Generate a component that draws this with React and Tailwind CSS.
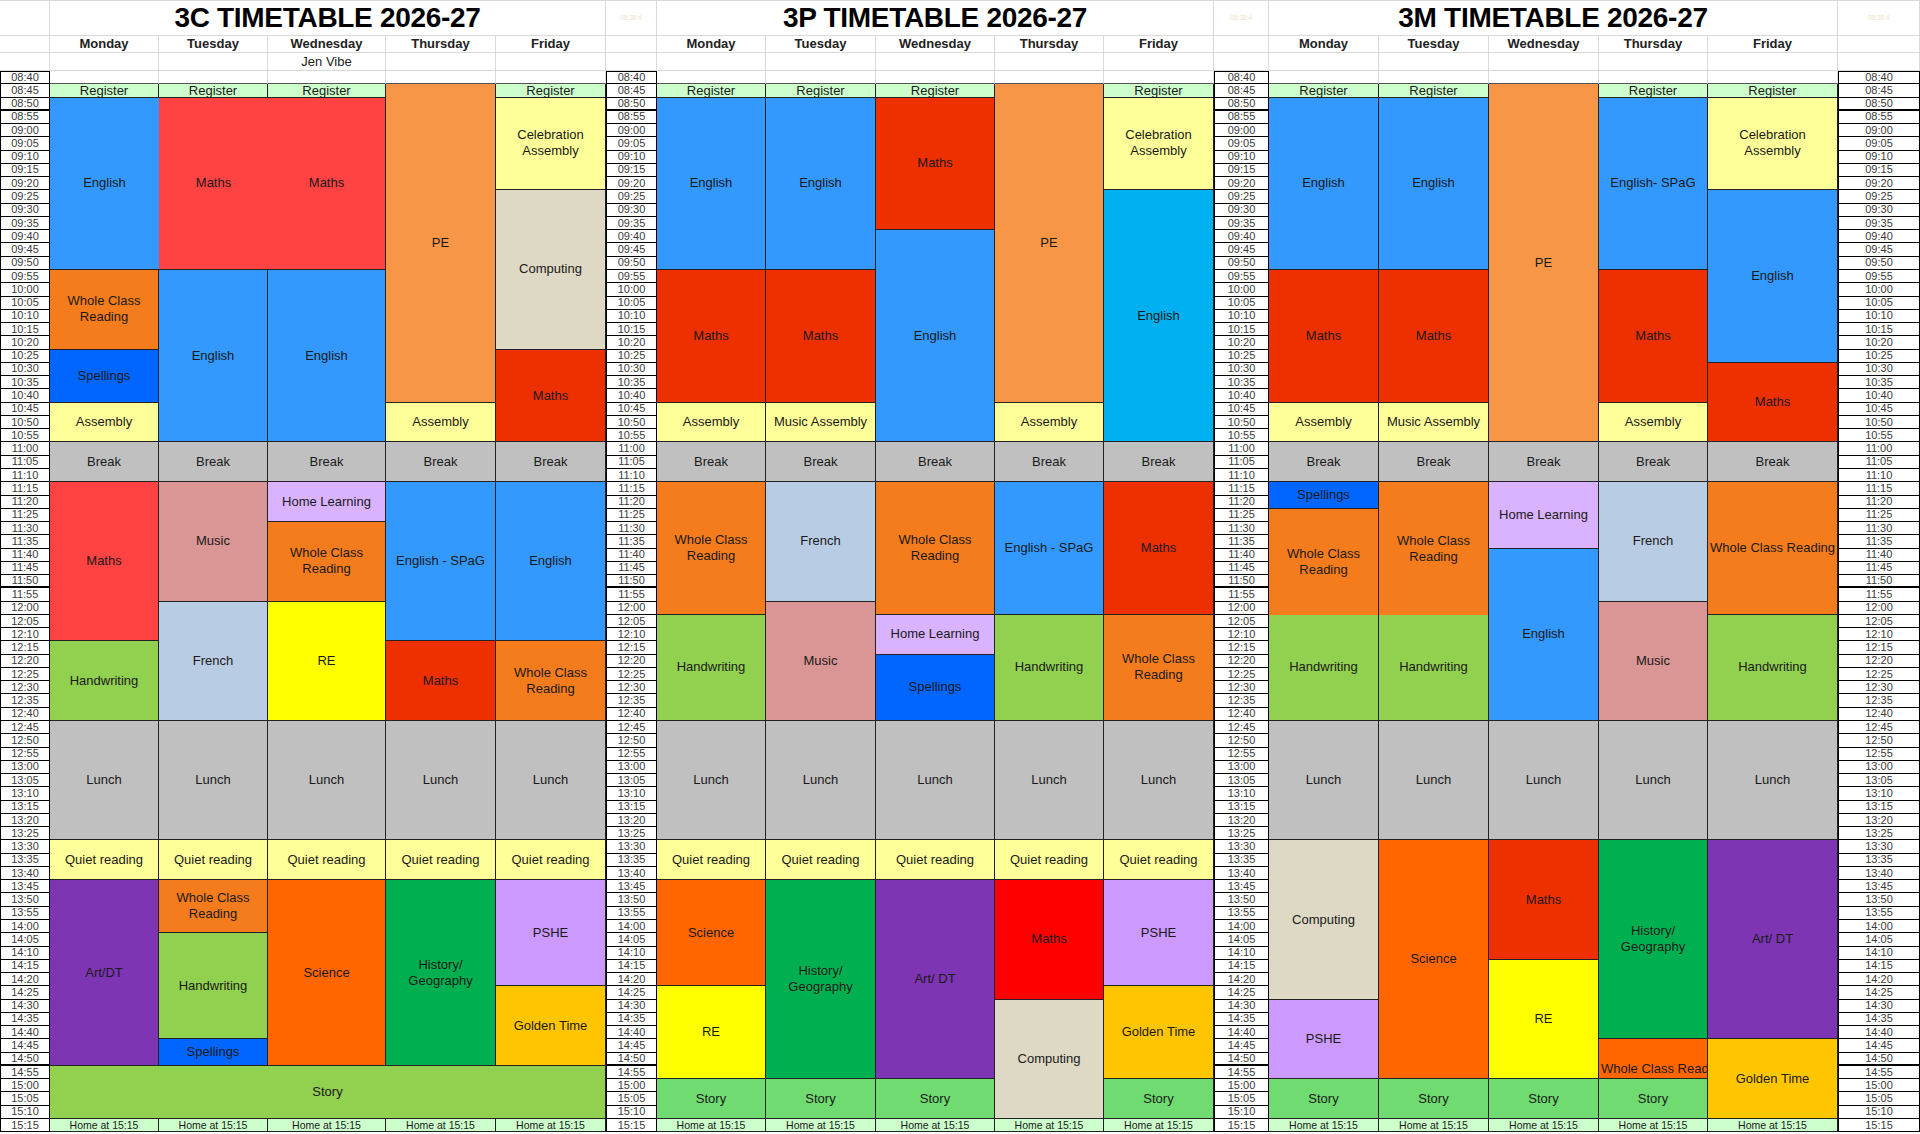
import React from "react";

const toMin = (t) => {
  const [h, m] = t.split(":").map(Number);
  return h * 60 + m;
};
const idx = (t) => (toMin(t) - 520) / 5;
const fmt = (m) =>
  `${String(Math.floor(m / 60)).padStart(2, "0")}:${String(m % 60).padStart(2, "0")}`;

const C = {
  reg: "bg-[#ccffcc]",
  eng: "bg-[#3399ff]",
  engC: "bg-[#00b0f0]",
  mathL: "bg-[#ff4343]",
  mathD: "bg-[#ee3000]",
  mathB: "bg-[#ff0000]",
  pe: "bg-[#f79646]",
  yel: "bg-[#ffff99]",
  comp: "bg-[#ddd9c4]",
  wcr: "bg-[#f47c1c]",
  spell: "bg-[#0066ff]",
  gray: "bg-[#c0c0c0]",
  music: "bg-[#da9694]",
  french: "bg-[#b8cce4]",
  hl: "bg-[#d9b3ff]",
  re: "bg-[#ffff00]",
  hand: "bg-[#92d050]",
  art: "bg-[#7d35b4]",
  sci: "bg-[#ff6600]",
  hist: "bg-[#00b050]",
  pshe: "bg-[#cc99ff]",
  gold: "bg-[#ffc600]",
  story: "bg-[#70db70]",
};

// [day, start, end, label, colour, flags, span]
const L3C = [
  [0, "08:45", "08:50", "Register", C.reg],
  [0, "08:50", "09:55", "English", C.eng, { nr: true }],
  [0, "09:55", "10:25", "Whole Class Reading", C.wcr],
  [0, "10:25", "10:45", "Spellings", C.spell],
  [0, "10:45", "11:00", "Assembly", C.yel],
  [0, "11:00", "11:15", "Break", C.gray],
  [0, "11:15", "12:15", "Maths", C.mathL],
  [0, "12:15", "12:45", "Handwriting", C.hand],
  [0, "12:45", "13:30", "Lunch", C.gray],
  [0, "13:30", "13:45", "Quiet reading", C.yel],
  [0, "13:45", "14:55", "Art/DT", C.art],

  [1, "08:45", "08:50", "Register", C.reg],
  [1, "08:50", "09:55", "Maths", C.mathL, { nr: true }],
  [1, "09:55", "11:00", "English", C.eng],
  [1, "11:00", "11:15", "Break", C.gray],
  [1, "11:15", "12:00", "Music", C.music],
  [1, "12:00", "12:45", "French", C.french],
  [1, "12:45", "13:30", "Lunch", C.gray],
  [1, "13:30", "13:45", "Quiet reading", C.yel],
  [1, "13:45", "14:05", "Whole Class Reading", C.wcr],
  [1, "14:05", "14:45", "Handwriting", C.hand],
  [1, "14:45", "14:55", "Spellings", C.spell],

  [2, "08:45", "08:50", "Register", C.reg],
  [2, "08:50", "09:55", "Maths", C.mathL],
  [2, "09:55", "11:00", "English", C.eng],
  [2, "11:00", "11:15", "Break", C.gray],
  [2, "11:15", "11:30", "Home Learning", C.hl],
  [2, "11:30", "12:00", "Whole Class Reading", C.wcr],
  [2, "12:00", "12:45", "RE", C.re],
  [2, "12:45", "13:30", "Lunch", C.gray],
  [2, "13:30", "13:45", "Quiet reading", C.yel],
  [2, "13:45", "14:55", "Science", C.sci],

  [3, "08:45", "10:45", "PE", C.pe],
  [3, "10:45", "11:00", "Assembly", C.yel],
  [3, "11:00", "11:15", "Break", C.gray],
  [3, "11:15", "12:15", "English - SPaG", C.eng],
  [3, "12:15", "12:45", "Maths", C.mathD],
  [3, "12:45", "13:30", "Lunch", C.gray],
  [3, "13:30", "13:45", "Quiet reading", C.yel],
  [3, "13:45", "14:55", "History/ Geography", C.hist],

  [4, "08:45", "08:50", "Register", C.reg],
  [4, "08:50", "09:25", "Celebration Assembly", C.yel],
  [4, "09:25", "10:25", "Computing", C.comp],
  [4, "10:25", "11:00", "Maths", C.mathD],
  [4, "11:00", "11:15", "Break", C.gray],
  [4, "11:15", "12:15", "English", C.eng],
  [4, "12:15", "12:45", "Whole Class Reading", C.wcr],
  [4, "12:45", "13:30", "Lunch", C.gray],
  [4, "13:30", "13:45", "Quiet reading", C.yel],
  [4, "13:45", "14:25", "PSHE", C.pshe],
  [4, "14:25", "14:55", "Golden Time", C.gold],

  [0, "14:55", "15:15", "Story", C.hand, {}, 5],
];

const L3P = [
  [0, "08:45", "08:50", "Register", C.reg],
  [0, "08:50", "09:55", "English", C.eng],
  [0, "09:55", "10:45", "Maths", C.mathD],
  [0, "10:45", "11:00", "Assembly", C.yel],
  [0, "11:00", "11:15", "Break", C.gray],
  [0, "11:15", "12:05", "Whole Class Reading", C.wcr],
  [0, "12:05", "12:45", "Handwriting", C.hand],
  [0, "12:45", "13:30", "Lunch", C.gray],
  [0, "13:30", "13:45", "Quiet reading", C.yel],
  [0, "13:45", "14:25", "Science", C.sci],
  [0, "14:25", "15:00", "RE", C.re],
  [0, "15:00", "15:15", "Story", C.story],

  [1, "08:45", "08:50", "Register", C.reg],
  [1, "08:50", "09:55", "English", C.eng],
  [1, "09:55", "10:45", "Maths", C.mathD],
  [1, "10:45", "11:00", "Music Assembly", C.yel],
  [1, "11:00", "11:15", "Break", C.gray],
  [1, "11:15", "12:00", "French", C.french],
  [1, "12:00", "12:45", "Music", C.music],
  [1, "12:45", "13:30", "Lunch", C.gray],
  [1, "13:30", "13:45", "Quiet reading", C.yel],
  [1, "13:45", "15:00", "History/ Geography", C.hist],
  [1, "15:00", "15:15", "Story", C.story],

  [2, "08:45", "08:50", "Register", C.reg],
  [2, "08:50", "09:40", "Maths", C.mathD],
  [2, "09:40", "11:00", "English", C.eng],
  [2, "11:00", "11:15", "Break", C.gray],
  [2, "11:15", "12:05", "Whole Class Reading", C.wcr],
  [2, "12:05", "12:20", "Home Learning", C.hl],
  [2, "12:20", "12:45", "Spellings", C.spell],
  [2, "12:45", "13:30", "Lunch", C.gray],
  [2, "13:30", "13:45", "Quiet reading", C.yel],
  [2, "13:45", "15:00", "Art/ DT", C.art],
  [2, "15:00", "15:15", "Story", C.story],

  [3, "08:45", "10:45", "PE", C.pe],
  [3, "10:45", "11:00", "Assembly", C.yel],
  [3, "11:00", "11:15", "Break", C.gray],
  [3, "11:15", "12:05", "English - SPaG", C.eng],
  [3, "12:05", "12:45", "Handwriting", C.hand],
  [3, "12:45", "13:30", "Lunch", C.gray],
  [3, "13:30", "13:45", "Quiet reading", C.yel],
  [3, "13:45", "14:30", "Maths", C.mathB],
  [3, "14:30", "15:15", "Computing", C.comp],

  [4, "08:45", "08:50", "Register", C.reg],
  [4, "08:50", "09:25", "Celebration Assembly", C.yel],
  [4, "09:25", "11:00", "English", C.engC],
  [4, "11:00", "11:15", "Break", C.gray],
  [4, "11:15", "12:05", "Maths", C.mathD],
  [4, "12:05", "12:45", "Whole Class Reading", C.wcr],
  [4, "12:45", "13:30", "Lunch", C.gray],
  [4, "13:30", "13:45", "Quiet reading", C.yel],
  [4, "13:45", "14:25", "PSHE", C.pshe],
  [4, "14:25", "15:00", "Golden Time", C.gold],
  [4, "15:00", "15:15", "Story", C.story],
];

const L3M = [
  [0, "08:45", "08:50", "Register", C.reg],
  [0, "08:50", "09:55", "English", C.eng],
  [0, "09:55", "10:45", "Maths", C.mathD],
  [0, "10:45", "11:00", "Assembly", C.yel],
  [0, "11:00", "11:15", "Break", C.gray],
  [0, "11:15", "11:25", "Spellings", C.spell],
  [0, "11:25", "12:05", "Whole Class Reading", C.wcr, { nb: true }],
  [0, "12:05", "12:45", "Handwriting", C.hand],
  [0, "12:45", "13:30", "Lunch", C.gray],
  [0, "13:30", "14:30", "Computing", C.comp],
  [0, "14:30", "15:00", "PSHE", C.pshe],
  [0, "15:00", "15:15", "Story", C.story],

  [1, "08:45", "08:50", "Register", C.reg],
  [1, "08:50", "09:55", "English", C.eng],
  [1, "09:55", "10:45", "Maths", C.mathD],
  [1, "10:45", "11:00", "Music Assembly", C.yel],
  [1, "11:00", "11:15", "Break", C.gray],
  [1, "11:15", "12:05", "Whole Class Reading", C.wcr, { nb: true }],
  [1, "12:05", "12:45", "Handwriting", C.hand],
  [1, "12:45", "13:30", "Lunch", C.gray],
  [1, "13:30", "15:00", "Science", C.sci],
  [1, "15:00", "15:15", "Story", C.story],

  [2, "08:45", "11:00", "PE", C.pe],
  [2, "11:00", "11:15", "Break", C.gray],
  [2, "11:15", "11:40", "Home Learning", C.hl],
  [2, "11:40", "12:45", "English", C.eng],
  [2, "12:45", "13:30", "Lunch", C.gray],
  [2, "13:30", "14:15", "Maths", C.mathD],
  [2, "14:15", "15:00", "RE", C.re],
  [2, "15:00", "15:15", "Story", C.story],

  [3, "08:45", "08:50", "Register", C.reg],
  [3, "08:50", "09:55", "English- SPaG", C.eng],
  [3, "09:55", "10:45", "Maths", C.mathD],
  [3, "10:45", "11:00", "Assembly", C.yel],
  [3, "11:00", "11:15", "Break", C.gray],
  [3, "11:15", "12:00", "French", C.french],
  [3, "12:00", "12:45", "Music", C.music],
  [3, "12:45", "13:30", "Lunch", C.gray],
  [3, "13:30", "14:45", "History/ Geography", C.hist],
  [3, "14:45", "15:00", "Whole Class Reading", C.sci, { trunc: true }],
  [3, "15:00", "15:15", "Story", C.story],

  [4, "08:45", "08:50", "Register", C.reg],
  [4, "08:50", "09:25", "Celebration Assembly", C.yel],
  [4, "09:25", "10:30", "English", C.eng],
  [4, "10:30", "11:00", "Maths", C.mathD],
  [4, "11:00", "11:15", "Break", C.gray],
  [4, "11:15", "12:05", "Whole Class Reading", C.wcr],
  [4, "12:05", "12:45", "Handwriting", C.hand],
  [4, "12:45", "13:30", "Lunch", C.gray],
  [4, "13:30", "14:45", "Art/ DT", C.art],
  [4, "14:45", "15:15", "Golden Time", C.gold],
];

const SECTIONS = [
  { title: "3C TIMETABLE 2026-27", col: 2, lessons: L3C, note: [2, "Jen Vibe"] },
  { title: "3P TIMETABLE 2026-27", col: 8, lessons: L3P },
  { title: "3M TIMETABLE 2026-27", col: 14, lessons: L3M },
];

const DAYS = ["Monday", "Tuesday", "Wednesday", "Thursday", "Friday"];
const TIME_COLS = [1, 7, 13, 19];
const TIMES = Array.from({ length: 80 }, (_, i) => fmt(520 + i * 5));

function Lesson({ l, col }) {
  const [day, s, e, label, bg, flags = {}, span = 1] = l;
  const r0 = idx(s) + 4;
  const r1 = idx(e) + 4;
  const br = flags.nr ? "" : "border-r";
  const bb = flags.nb ? "" : "border-b";
  const lead = r1 - r0 === 1 ? "leading-none" : "leading-[16px]";
  const align = flags.trunc
    ? "items-end justify-start whitespace-nowrap overflow-hidden pl-[2px] pb-[1px]"
    : "items-center justify-center text-center px-[2px]";
  return (
    <div
      className={`flex border-[#222] text-[13px] text-[#1a1a1a] ${lead} ${br} ${bb} ${bg} ${align}`}
      style={{ gridColumn: `${col + day} / span ${span}`, gridRow: `${r0} / ${r1}` }}
    >
      {label}
    </div>
  );
}

function TimeHeader({ c, r, faint }) {
  return (
    <div
      className={`flex items-center justify-center border-r border-b border-[#d9d9d9] ${r === 1 ? "border-t" : ""}`}
      style={{ gridColumn: `${c}`, gridRow: `${r}` }}
    >
      {faint ? <span className="text-[7px] text-[#ece6cc] tracking-tight">08:38:4</span> : null}
    </div>
  );
}

function TimeCell({ c, i, t }) {
  const thick = i === 2 || i === 38 || i === 74;
  return (
    <div
      className={`flex items-center justify-center bg-white border-black border-l border-r text-[11px] leading-none text-[#3a3a3a] ${thick ? "border-b-2" : "border-b"} ${i === 0 ? "border-t" : ""}`}
      style={{ gridColumn: `${c}`, gridRow: `${i + 4}` }}
    >
      {t}
    </div>
  );
}

function Section({ sec }) {
  return (
    <>
      <div
        className="flex items-center justify-center border-r border-b border-t border-[#d9d9d9] text-[28px] font-bold text-black leading-none tracking-[-0.3px]"
        style={{ gridColumn: `${sec.col} / span 5`, gridRow: "1" }}
      >
        {sec.title}
      </div>
      {DAYS.map((d, di) => (
        <React.Fragment key={d}>
          <div
            className="flex items-center justify-center border-r border-b border-[#d9d9d9] text-[13px] font-bold text-[#222]"
            style={{ gridColumn: `${sec.col + di}`, gridRow: "2" }}
          >
            {d}
          </div>
          <div
            className="flex items-center justify-center border-r border-b border-[#d9d9d9] text-[13px] text-[#222]"
            style={{ gridColumn: `${sec.col + di}`, gridRow: "3" }}
          >
            {sec.note && sec.note[0] === di ? sec.note[1] : ""}
          </div>
          <div
            className="border-r border-b border-[#d9d9d9] border-b-[#555] bg-white"
            style={{ gridColumn: `${sec.col + di}`, gridRow: "4" }}
          />
          <div
            className="flex items-center justify-center border-r border-b border-[#222] bg-[#ccffcc] text-[10.5px] leading-none text-[#1a1a1a]"
            style={{ gridColumn: `${sec.col + di}`, gridRow: "83" }}
          >
            Home at 15:15
          </div>
        </React.Fragment>
      ))}
      {sec.lessons.map((l, li) => (
        <Lesson key={li} l={l} col={sec.col} />
      ))}
    </>
  );
}

export default function App() {
  return (
    <div className="w-[1920px] h-[1134px] overflow-hidden bg-white font-['Liberation_Sans',Arial,sans-serif]">
      <div className="grid grid-cols-[50px_109px_109px_118px_110px_110px_51px_109px_110px_119px_109px_110px_55px_110px_110px_110px_109px_130px_82px] grid-rows-[36px_17px_18px_repeat(80,13.27px)]">
        {TIME_COLS.map((c, ci) => (
          <React.Fragment key={c}>
            <TimeHeader c={c} r={1} faint={ci > 0} />
            <TimeHeader c={c} r={2} />
            <TimeHeader c={c} r={3} />
            {TIMES.map((t, i) => (
              <TimeCell key={t} c={c} i={i} t={t} />
            ))}
          </React.Fragment>
        ))}
        {SECTIONS.map((sec) => (
          <Section key={sec.title} sec={sec} />
        ))}
      </div>
    </div>
  );
}
